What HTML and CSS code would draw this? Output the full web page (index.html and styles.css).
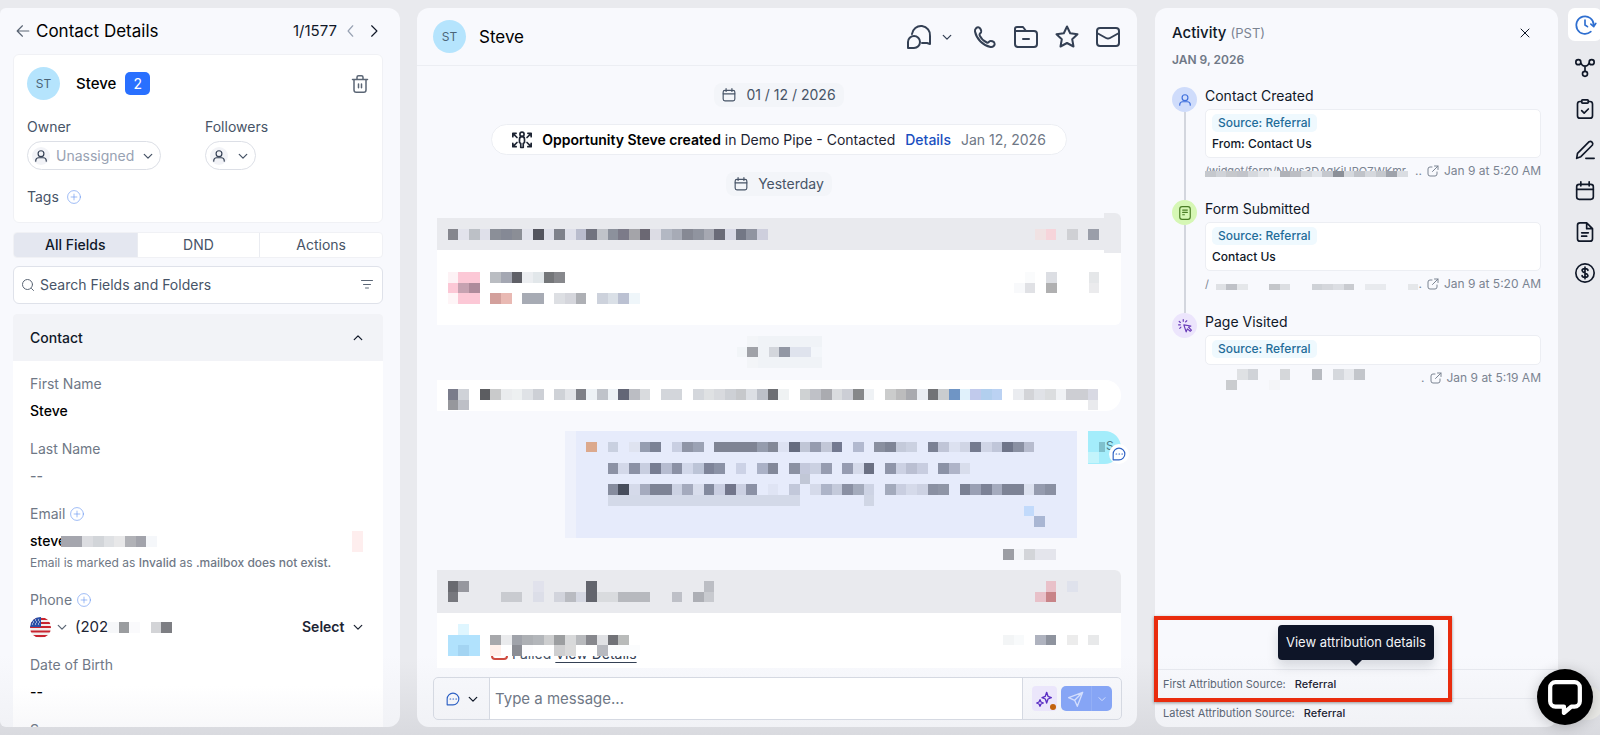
FILE: index.html
```
<!DOCTYPE html>
<html lang="en">
<head>
    <meta charset="UTF-8">
    <meta name="viewport" content="width=device-width, initial-scale=1.0">
    <title>Contact Details</title>
    <link rel="stylesheet" href="styles.css">
</head>
<body>
    <svg class="sprite" aria-hidden="true">
        <symbol id="chevron" viewBox="0 0 24 24"><path d="M3 8l9 9 9-9"/></symbol>
        <symbol id="user" viewBox="0 0 24 24"><circle cx="12" cy="8" r="5"/><path d="M3 21v-1a5 5 0 0 1 5-5h8a5 5 0 0 1 5 5v1"/></symbol>
        <symbol id="calendar" viewBox="0 0 24 24"><rect x="2" y="4" width="20" height="18" rx="3"/><path d="M2 10h20M7 1v5M17 1v5"/></symbol>
        <symbol id="plus" viewBox="0 0 24 24"><circle cx="12" cy="12" r="11"/><path d="M12 7v10M7 12h10"/></symbol>
        <symbol id="bubble" viewBox="0 0 24 24"><path d="M2 22V12a10 10 0 1 1 10 10z"/><path d="M7 12h1M12 12h1M17 12h1"/></symbol>
        <symbol id="link-out" viewBox="0 0 24 24"><path d="M10 4H6a4 4 0 0 0-4 4v10a4 4 0 0 0 4 4h10a4 4 0 0 0 4-4v-4M15 2h7v7M22 2L11 13"/></symbol>
    </svg>

    <div class="app">
        <aside class="panel contact-panel">
            <div class="panel-title">
                <button class="icon-btn" aria-label="Back"><svg class="icon s14 muted" viewBox="0 0 24 24"><path d="M22 12H2M11 3l-9 9 9 9"/></svg></button>
                <h1>Contact Details</h1>
                <span class="pager">1/1577</span>
                <button class="icon-btn" aria-label="Previous"><svg class="icon s14 faint" viewBox="0 0 24 24"><path d="M15 3l-8 9 8 9"/></svg></button>
                <button class="icon-btn next" aria-label="Next"><svg class="icon s14" viewBox="0 0 24 24"><path d="M8 3l9 9-9 9"/></svg></button>
            </div>

            <section class="summary">
                <div class="person">
                    <span class="avatar">ST</span>
                    <strong>Steve</strong>
                    <span class="count">2</span>
                    <button class="icon-btn trash" aria-label="Delete"><svg class="icon s18 muted" viewBox="0 0 24 24"><path d="M2 6h20M8 6V3a2 2 0 0 1 2-2h4a2 2 0 0 1 2 2v3M4 6v14a3 3 0 0 0 3 3h10a3 3 0 0 0 3-3V6M10 12v5M14 12v5"/></svg></button>
                </div>
                <div class="assign">
                    <div>
                        <label for="owner">Owner</label>
                        <div class="pill-select owner">
                            <span class="mini"><svg class="icon s14"><use href="#user"/></svg></span>
                            <select id="owner"><option>Unassigned</option></select>
                            <svg class="icon s10"><use href="#chevron"/></svg>
                        </div>
                    </div>
                    <div>
                        <label for="followers">Followers</label>
                        <div class="pill-select followers">
                            <span class="mini"><svg class="icon s14"><use href="#user"/></svg></span>
                            <select id="followers"><option></option></select>
                            <svg class="icon s10"><use href="#chevron"/></svg>
                        </div>
                    </div>
                </div>
                <div class="tags">Tags <button class="icon-btn" aria-label="Add tag"><svg class="icon s14 add"><use href="#plus"/></svg></button></div>
            </section>

            <div class="tabs">
                <button class="active">All Fields</button>
                <button>DND</button>
                <button>Actions</button>
            </div>

            <div class="search">
                <svg class="icon s12 muted" viewBox="0 0 24 24"><circle cx="11" cy="11" r="10"/><path d="M19 19l4 4"/></svg>
                <input type="text" placeholder="Search Fields and Folders" aria-label="Search Fields and Folders">
                <button class="icon-btn" aria-label="Filter"><svg class="icon s12 muted" viewBox="0 0 24 24"><path d="M1 3h22M5 11h14M9 18h6"/></svg></button>
            </div>

            <section class="fields">
                <button class="fields-head">Contact <svg class="icon s10 flip"><use href="#chevron"/></svg></button>
                <div class="field">
                    <div class="label">First Name</div>
                    <div class="value">Steve</div>
                </div>
                <div class="field">
                    <div class="label">Last Name</div>
                    <div class="value empty">--</div>
                </div>
                <div class="field">
                    <div class="label">Email <button class="icon-btn" aria-label="Add email"><svg class="icon s14 add"><use href="#plus"/></svg></button></div>
                    <div class="value">steve<svg class="mosaic over" data-cells="0:a5a6ae a5a6ae dcdde1 d2d5d9 dfe1e4 e8e8e9 b1b2b7 a2a3ab f5f7fa"></svg>
                        <svg class="mosaic end" data-cells="0:feeeee/0:feeeee"></svg>
                    </div>
                    <div class="note">Email is marked as <b>Invalid</b> as <b>.mailbox does not exist.</b></div>
                </div>
                <div class="field">
                    <div class="label">Phone <button class="icon-btn" aria-label="Add phone"><svg class="icon s14 add"><use href="#plus"/></svg></button></div>
                    <div class="value phone">
                        <svg class="flag" viewBox="0 0 21 21">
                            <clipPath id="round"><circle cx="10.5" cy="10.5" r="10.5"/></clipPath>
                            <g clip-path="url(#round)">
                                <path fill="#f3eeee" d="M0 0h21v21H0z"/>
                                <path stroke="#c8242f" stroke-width="2" d="M0 2h21M0 6h21M0 10h21M0 14.500h21M0 19h21"/>
                                <path fill="#2b50a8" d="M0 0h11v10H0z"/>
                                <path stroke="#fff" stroke-width="1" stroke-dasharray="1 2" d="M2 3h9M3 5h8M2 7h9"/>
                            </g>
                        </svg>
                        <svg class="icon s10 muted"><use href="#chevron"/></svg>
                        <span class="number">(202</span><svg class="mosaic" data-cells="0:f6f7f9 9a9c9f fafafc 4:d3d4d7 7d7e83"></svg>
                        <select class="end" aria-label="Phone type"><option>Select</option></select>
                        <svg class="icon s10"><use href="#chevron"/></svg>
                    </div>
                </div>
                <div class="field">
                    <div class="label">Date of Birth</div>
                    <div class="value">--</div>
                </div>
                <div class="field">
                    <div class="label">Source</div>
                </div>
            </section>
        </aside>

        <main class="panel chat-panel">
            <header class="chat-head">
                <span class="avatar">ST</span>
                <h2>Steve</h2>
                <button class="icon-btn" aria-label="Conversations"><svg class="icon s24" viewBox="0 0 24 24"><path d="M5 9a9 9 0 0 1 18 2v8l-3-1h-5"/><path d="M1 23v-6a6 6 0 1 1 6 6z"/></svg></button>
                <button class="icon-btn tight" aria-label="More"><svg class="icon s10"><use href="#chevron"/></svg></button>
                <button class="icon-btn" aria-label="Call"><svg class="icon s24" viewBox="0 0 24 24"><path d="M6 2.500c-2-.8-4.500 1.500-4 4C3.500 14 10 20.500 17.500 22c2.500.500 4.800-2 4-4-.500-1.500-3.500-2.600-4.700-1.800-1.300.8-1.500 2-3 1.300-3-1.400-5.800-4.200-7.200-7.200-.7-1.500 1-2 1.500-3.200C8.500 5.800 7.500 3 6 2.500z"/></svg></button>
                <button class="icon-btn" aria-label="Folder"><svg class="icon s24" viewBox="0 0 24 24"><path d="M1 19V4a2 2 0 0 1 2-2h6l3 4h8a3 3 0 0 1 3 3v10a3 3 0 0 1-3 3H4a3 3 0 0 1-3-3zM1 6h11M9 14h6"/></svg></button>
                <button class="icon-btn" aria-label="Star"><svg class="icon s24" viewBox="0 0 24 24"><path d="M12 1.500l3.200 6.700 7.300 1-5.300 5 1.300 7.300L12 18l-6.500 3.500 1.300-7.300-5.300-5 7.300-1z"/></svg></button>
                <button class="icon-btn" aria-label="Email"><svg class="icon s24" viewBox="0 0 24 24"><rect x="1" y="3" width="22" height="18" rx="3"/><path d="M1 8l9 5a4 4 0 0 0 4 0l9-5"/></svg></button>
            </header>

            <div class="feed">
                <div class="day"><svg class="icon s14"><use href="#calendar"/></svg> 01 / 12 / 2026</div>
                <div class="event">
                    <svg class="icon s20" viewBox="0 0 24 24"><circle cx="12" cy="5" r="2.500"/><path d="M9 11a3 3 0 0 1 6 0v4l-1.500 1v5h-3v-5L9 15zM1 8V4h4M1 4l5 5M23 8V4h-4M23 4l-5 5M1 16v4h4M1 20l5-5M23 16v4h-4M23 20l-5-5"/></svg>
                    <span><b>Opportunity Steve created</b> in Demo Pipe - Contacted</span>
                    <a href="#">Details</a>
                    <time>Jan 12, 2026</time>
                </div>
                <div class="day"><svg class="icon s14"><use href="#calendar"/></svg> Yesterday</div>

                <article class="card first">
                    <div class="card-head">
                        <svg class="mosaic" data-cells="0:e9eaee 85868e e2e3ec bcc0c6 dfe0ea 8b8f98 858995 8b8e96 e2e3ec 53545e dfe0ea 7e818b dfe0ea b9bccd 71737f c0c3c9 8c919c 7c7b89 a4a4a9 6b6873 dcdce4 b3b8c3 a7abb6 868994 90949f a6a8b2 6a6b78 d8d9e6 737785 9094a1 cecfdd"></svg>
                        <svg class="mosaic" data-cells="0:f0e2e3 f6d4da 3:cfd0d4 5:9a9ea9"></svg>
                    </div>
                    <div class="card-body">
                        <svg class="mosaic" data-cells="1:fdf2f5 fcc8d6 fcc8d6 5:babdc2 a4a7b2 5f6067 eceef1 e2e7ea 747679 87888c/1:fcc8d6 c6a2b1 ae8b9b/1:fef5f7 fcc8d6 fcc8d6 5:d3a09c e9b9b3 8:a7abb4 a7abb4 11:dddfe3 d5d6dc aeb0b5 15:cdd2dc dae0e7 bbc1d2 eff6fa"></svg>
                        <svg class="mosaic" data-cells="1:fafbfc 3:dcdee3 7:e5e7e9/0:f8f9fb e0e1e5 3:b0b0b1 7:ebebed"></svg>
                    </div>
                </article>

                <svg class="mosaic hidden-day" data-cells="2:f3f5f8 f0f3f7 f0f3f7 f0f3f7 f0f3f7 f0f3f7 f0f3f7/1:f2f5f8 a0a2a8 f0f3f7 d3d6dc 9297a4 dfe3ed dfe3ed f3f6fa 9:f8f9fd/2:f3f5f8 f0f3f7 f0f3f7 f0f3f7 f0f3f7 f0f3f7 f0f3f7"></svg>

                <div class="hidden-event">
                    <svg class="mosaic" data-cells="1:7a7c8b cfd2d8 4:5c5d61 c9cacb eaecee edf0f1 dfe2e6 cdd0d6 11:cfd2d7 e2e4e8 7e8087 edf2f6 bfc3ca edf2f6 636676 bbbdc3 d9dbde 21:d3d6db d3d6db 24:d4d7dc dfe1e3 d8dade cdd0d5 c6c8cb dcdfe4 bcc0c8 6d6f74 eff2f3 34:cfd2d3 bfc1c7 aaabb0 dadcdf ccced5 86888a eff2f5 42:cbcccc bcbcbd a9aaaf eaedf2 727376 c9cccf 6f95c5 e0f1fb c1caec b2cfee bbd2f3 54:eaecf0 d3d4d8 e0e2e7 dbdddf f0f2f5 cdced3 cdced3 d8d9e3/1:96979c bdbfc6 61:e9eaed"></svg>
                </div>

                <div class="outgoing">
                    <div class="message">
                        <svg class="mosaic" data-cells="/2:dca98d 4:c9d0e0 6:dfe3f0 959db0 7b8295 10:c9cfe2 8f95a6 9ba2b4 14:7f8494 7f8494 7f8494 7f8494 959cad 838897 dde2f2 666c7f c0c6d6 959bae c2c7d7 737990 27:b2b9cf 29:8a90a0 7f8596 c4cada cbd1e1 34:7b8194 c0c5d7 dce1f0 d0d5e5 757b8f d0d5e6 c0c6d9 6f7589 8a90a2 b7bcce//4:8c92a5 d3d8e9 8b91a5 c8cee0 777d92 b6bcd0 8b91a5 d2d8ea bcc4d7 7e8499 8b92a6 16:ccd2e6 18:aab1c6 828899 21:8b91a2 c4c9dc cbd1e2 969cb0 26:969cb1 d5daea 6b7083 30:8f95a9 ccd1e3 babfd2 c8cde0 35:8b92a6 afb4c8 d8ddec/22:c1c7d6/4:868c9e 484e5d d5daea a5abbe 7d8395 7d8395 ccd2e3 a4aabd d8ddec 838a9e c9cee1 72768b cbd0e2 8b91a5 19:dfe4f4 21:c2c8da 23:d5daea adb4c8 c4cadb 8a90a3 a4abbc cdd3e4 30:a3aabc c9cee0 d5daea cdd2e3 8a90a2 8f95a6 37:7a8093 9aa0b4 7c8296 a5abbe 7d8395 7d8395 dce1ef 959bae 8a90a2/4:d3d9e8 d3d9e8 d3d9e8 d3d9e8 d3d9e8 d3d9e8 d3d9e8 d3d9e8 d3d9e8 d3d9e8 d3d9e8 d3d9e8 d3d9e8 d3d9e8 d3d9e8 d3d9e8 d3d9e8 d3d9e8 28:d0d6e5/43:c2dafb/44:a9b6d3"></svg>
                    </div>
                    <div class="sender">
                        <span class="sender-avatar">S</span>
                        <svg class="mosaic" data-cells="0:a4edfb a4edfb/0:a4edfb 7fc0cc/0:c3f4fb a4edfb"></svg>
                        <span class="channel"><svg class="icon s14 blue"><use href="#bubble"/></svg></span>
                    </div>
                </div>

                <svg class="mosaic hidden-time" data-cells="0:9c9ea4 f3f5f8 d3d5d9 e4e5ec e4e5ec"></svg>

                <article class="card second">
                    <div class="card-head">
                        <svg class="mosaic" data-cells="1:696a70 96979e 9:e1e2ec 14:63656d 25:bcbec4/1:77787e 6:c9cbd0 c9cbd0 9:dcdee8 11:d2d4dc b9bbc1 d5d8e2 63656d d9dbde d9dbde b7b9be b7b9be b7b9be 22:bec0c7 24:adafb5 c8cacf"></svg>
                        <svg class="mosaic" data-cells="1:e9c1c9 3:dfe2ec/0:e8c1c9 c88488 5:e9eaee"></svg>
                    </div>
                    <div class="card-body">
                        <svg class="mosaic" data-cells="2:dff6ff/1:b1e2fd b1e2fd b1e2fd 5:a7a8ab eaebed a0a3aa adb0b4 b3b6ba cdcecf 9c9ea0 d8d9da b8babd 87888d e0e1e4 717277 b9bbba/1:b1e2fd a3d4f2 b1e2fd 5:fff0ea ffffff 8b8d94 fcfcfd ffffff ffffff cfcfd0 dadada ffffff ffffff b7b9bf fbfcfd fbfcfd fbfcfd"></svg>
                        <svg class="mosaic" data-cells="/0:f3f5f6 f8fafb 3:afb3bf 8e939e 6:ececec 8:e8e9ea"></svg>
                        <div class="failed"><span class="stub"></span>Failed <a href="#">View Details</a></div>
                    </div>
                </article>
            </div>

            <form class="composer">
                <button type="button" class="channel-btn" aria-label="Channel"><svg class="icon s14 blue"><use href="#bubble"/></svg><svg class="icon s10"><use href="#chevron"/></svg></button>
                <input type="text" placeholder="Type a message..." aria-label="Message">
                <div class="composer-actions">
                    <button type="button" class="ai-btn" aria-label="Write with AI"><svg class="icon s16" viewBox="0 0 24 24"><path d="M16 2l2 6 5 2-5 2-2 6-2-6-5-2 5-2zM6 13l1.500 3.500L11 18l-3.500 1.500L6 23l-1.500-3.500L1 18l3.500-1.500z"/></svg></button>
                    <div class="send">
                        <button type="button" aria-label="Send"><svg class="icon s16" viewBox="0 0 24 24"><path d="M22 2L1 10l9 4 4 9zM22 2L10 14"/></svg></button>
                        <button type="button" aria-label="Send options"><svg class="icon s8"><use href="#chevron"/></svg></button>
                    </div>
                </div>
            </form>
        </main>

        <aside class="panel activity-panel">
            <header class="activity-head">
                <h2>Activity <small>(PST)</small></h2>
                <button class="icon-btn" aria-label="Close"><svg class="icon s12" viewBox="0 0 24 24"><path d="M4 4l16 16M20 4L4 20"/></svg></button>
            </header>
            <div class="date">JAN 9, 2026</div>
            <ul class="timeline">
                <li>
                    <span class="dot created"><svg class="icon s14"><use href="#user"/></svg></span>
                    <h3>Contact Created</h3>
                    <div class="box"><span class="source">Source: Referral</span><p>From: Contact Us</p></div>
                    <div class="meta">
                        <span class="url">/widget/form/NVus3DAgKiUPQZWKmr<svg class="mosaic cover" data-cells="0:c5c8cd d0d3d8 c6c8cc c2c4ca d5d8dd e3e6ea f0f2f5 b0b2b8 bcbec4 d5d8dd e2e5ea c5c8ce 8c9098 d5d8dd c0c3c9 d5d8dd c5c8cd 9fa3ab dadde2"></svg></span>
                        <span>..</span><svg class="icon s12"><use href="#link-out"/></svg><time>Jan 9 at 5:20 AM</time>
                    </div>
                </li>
                <li>
                    <span class="dot form"><svg class="icon s14" viewBox="0 0 24 24"><rect x="3" y="1" width="18" height="22" rx="4"/><path d="M8 7h8M8 11h8M8 15h3"/></svg></span>
                    <h3>Form Submitted</h3>
                    <div class="box"><span class="source">Source: Referral</span><p>Contact Us</p></div>
                    <div class="meta">
                        <span class="url">/<svg class="mosaic" data-cells="1:dfe1e5 bfc1c7 e5e7ea 6:c4c6ca dcdee2 10:cfd2d7 d5d7dc dcdee3 c9cbd0 15:e8eaee e8eaee 19:e5e7ea"></svg></span>
                        <span>...</span><svg class="icon s12"><use href="#link-out"/></svg><time>Jan 9 at 5:20 AM</time>
                    </div>
                </li>
                <li>
                    <span class="dot visit"><svg class="icon s14" viewBox="0 0 24 24"><path d="M10 10l4 12 2-5 5 4 2-2-5-5 4-2zM9 1v3M2 4l2 2M1 10h3M3 16l2-2M15 3l-2 2"/></svg></span>
                    <h3>Page Visited</h3>
                    <div class="box"><span class="source">Source: Referral</span></div>
                    <div class="meta">
                        <span class="url"><svg class="mosaic tall" data-cells="3:dfe1e4 d0d3d8 7:d5d7da 10:b8bbc1 12:d5d8dd e6e8ec c3c6cb/2:cacccf 6:f4f5f8"></svg></span>
                        <span>.</span><svg class="icon s12"><use href="#link-out"/></svg><time>Jan 9 at 5:19 AM</time>
                    </div>
                </li>
            </ul>
            <footer class="sources">
                <div>First Attribution Source: <b>Referral</b></div>
                <div>Latest Attribution Source: <b>Referral</b></div>
                <div class="highlight"><span class="tooltip" role="tooltip">View attribution details</span></div>
            </footer>
        </aside>

        <nav class="rail">
            <button class="active" aria-label="Activity"><svg class="icon s20" viewBox="0 0 24 24"><path d="M19 20a10.500 10.500 0 1 1 3.500-8M12 6v6l3 2M19 11l3.500 3L25 10"/></svg></button>
            <button aria-label="Opportunities"><svg class="icon s20" viewBox="0 0 24 24"><circle cx="4" cy="5" r="3"/><circle cx="20" cy="5" r="3"/><circle cx="12" cy="19" r="3"/><path d="M7 6c2 5 8 5 10 0M12 10v6"/></svg></button>
            <button aria-label="Tasks"><svg class="icon s20" viewBox="0 0 24 24"><path d="M8 3H6a3 3 0 0 0-3 3v14a3 3 0 0 0 3 3h12a3 3 0 0 0 3-3V6a3 3 0 0 0-3-3h-2"/><rect x="8" y="1" width="8" height="4" rx="1"/><path d="M8 14l3 3 5-5"/></svg></button>
            <button aria-label="Notes"><svg class="icon s20" viewBox="0 0 24 24"><path d="M13 22h10M2 22l1-6L17 2a3 3 0 0 1 4 4L7 20z"/></svg></button>
            <button aria-label="Appointments"><svg class="icon s20"><use href="#calendar"/></svg></button>
            <button aria-label="Documents"><svg class="icon s20" viewBox="0 0 24 24"><path d="M14 1H6a3 3 0 0 0-3 3v16a3 3 0 0 0 3 3h12a3 3 0 0 0 3-3V8zM14 1v7h7M8 13h8M8 17h6"/></svg></button>
            <button aria-label="Payments"><svg class="icon s20" viewBox="0 0 24 24"><circle cx="12" cy="12" r="11"/><path d="M15.500 9c0-3-7-3-7 0s7 3 7 6-7 3-7 0M12 5v14"/></svg></button>
        </nav>
    </div>

    <span class="chat-shadow"></span>
    <button class="chat-widget" aria-label="Open chat"><svg viewBox="0 0 34 34"><path d="M8 3h18a5 5 0 0 1 5 5v13a5 5 0 0 1-5 5h-3l-7 6v-6H8a5 5 0 0 1-5-5V8a5 5 0 0 1 5-5z"/></svg></button>

    <script src="script.js"></script>
</body>
</html>
```
FILE: styles.css
```
* {
    margin: 0;
    padding: 0;
    box-sizing: border-box;
}

body {
    font-family: Inter, "Liberation Sans", sans-serif;
    font-size: 14px;
    line-height: 20px;
    color: #101828;
    background: linear-gradient(#e9eaee 90%, #d9dadf);
    height: 100vh;
    overflow: hidden;
}

button, input, select {
    font: inherit;
    color: inherit;
    background: none;
    border: none;
    outline: none;
    appearance: none;
}

button {
    cursor: pointer;
}

a {
    text-decoration: none;
}

h1, h2, h3, b, strong {
    font-weight: 500;
}

.sprite {
    display: none;
}

.icon {
    display: block;
    flex: none;
    fill: none;
    stroke: currentColor;
    stroke-width: 2;
    stroke-linecap: round;
    stroke-linejoin: round;
    overflow: visible;
}

.s8 { width: 8px; height: 8px; stroke-width: 3; }
.s10 { width: 10px; height: 10px; stroke-width: 3; }
.s12 { width: 12px; height: 12px; }
.s14 { width: 14px; height: 14px; }
.s16 { width: 16px; height: 16px; }
.s18 { width: 18px; height: 18px; }
.s20 { width: 20px; height: 20px; }
.s24 { width: 24px; height: 24px; }

.muted { color: #5b6675; }
.faint { color: #98a2b3; }
.blue { color: #2f62c4; }

.add {
    color: #5b8def;
    stroke-width: 1;
}

.flip {
    transform: rotate(180deg);
}

.icon-btn {
    display: inline-flex;
    align-items: center;
}

.mosaic {
    display: block;
    flex: none;
}

.app {
    display: grid;
    grid-template-columns: 400px 1fr 403px 42px;
    height: 100vh;
    padding: 8px 0;
}

.panel {
    display: flex;
    flex-direction: column;
    min-width: 0;
    min-height: 0;
    background: linear-gradient(#f8f9fd 90%, #f1f2f6);
    border-radius: 12px;
    overflow: hidden;
}

.avatar {
    display: flex;
    align-items: center;
    justify-content: center;
    width: 33px;
    height: 33px;
    border-radius: 50%;
    background: #b5e4fd;
    color: #4b6478;
    font-size: 12px;
}

/* contact column */

.contact-panel {
    padding: 0 17px 0 13px;
    border-radius: 6px 12px 12px 6px;
}

.panel-title {
    display: flex;
    align-items: center;
    height: 46px;
    flex: none;
    padding: 0 2px 0 3px;
}

.panel-title h1 {
    font-size: 17px;
    font-weight: 400;
    margin-left: 6px;
    flex: 1;
    color: #000;
}

.pager {
    font-size: 15px;
    margin-right: 7px;
}

.next {
    margin-left: 9px;
}

.summary {
    flex: none;
    height: 169px;
    padding: 12px 14px;
    background: #fff;
    border: 1px solid #f0f1f5;
    border-radius: 6px;
}

.person {
    display: flex;
    align-items: center;
    margin: 0 -1px;
}

.person strong {
    font-size: 15px;
    font-weight: 500;
    margin-left: 16px;
    color: #000;
}

.count {
    width: 25px;
    height: 23px;
    margin-left: 9px;
    border-radius: 5px;
    background: #2970ff;
    color: #fff;
    line-height: 23px;
    text-align: center;
}

.trash {
    margin-left: auto;
}

.assign {
    display: grid;
    grid-template-columns: 178px 1fr;
    margin: 17px 0 0 -1px;
    color: #475467;
}

.pill-select {
    display: flex;
    align-items: center;
    height: 29px;
    margin-top: 4px;
    padding: 0 7px 0 4px;
    border: 1px solid #dcdfe6;
    border-radius: 15px;
}

.owner { width: 134px; }
.followers { width: 51px; }

.pill-select select {
    flex: 1;
    min-width: 0;
    padding-left: 6px;
    color: #98a2b3;
}

.mini {
    padding: 2px;
    border-radius: 50%;
    background: #f2f3f7;
    color: #344054;
}

.tags {
    display: flex;
    align-items: center;
    gap: 8px;
    margin: 17px 0 0 -1px;
    color: #475467;
}

.tabs {
    display: grid;
    grid-template-columns: 1fr 1fr 1fr;
    flex: none;
    height: 26px;
    margin-top: 9px;
    border: 1px solid #f0f1f5;
    border-radius: 4px;
    overflow: hidden;
    background: #fff;
    color: #475467;
}

.tabs button + button {
    border-left: 1px solid #eaecf1;
}

.tabs .active {
    background: #e4e7f0;
    color: #101828;
    font-weight: 500;
}

.search {
    display: flex;
    align-items: center;
    flex: none;
    height: 38px;
    margin-top: 8px;
    padding: 0 9px 0 8px;
    background: #fff;
    border: 1px solid #dfe2ea;
    border-radius: 6px;
}

.search input {
    flex: 1;
    min-width: 0;
    padding-left: 6px;
}

.search input::placeholder {
    color: #475467;
    opacity: 1;
}

.fields {
    flex: 1;
    min-height: 0;
    margin-top: 10px;
    overflow: hidden;
    background: linear-gradient(#fff 90%, #f8f8fa);
    border-radius: 4px 4px 0 0;
}

.fields-head {
    display: flex;
    align-items: center;
    justify-content: space-between;
    width: 100%;
    height: 47px;
    padding: 0 20px 0 17px;
    margin-bottom: 12px;
    background: #f2f3f7;
    font-weight: 500;
}

.field {
    padding: 0 20px 0 17px;
    margin-bottom: 16px;
}

.label {
    display: flex;
    align-items: center;
    gap: 5px;
    height: 22px;
    color: #6f7886;
}

.value {
    display: flex;
    align-items: center;
    height: 22px;
    margin-top: 5px;
    font-weight: 500;
    color: #000;
}

.value.empty {
    color: #6f7886;
}

.over {
    position: relative;
    margin-left: -5px;
}

.end {
    margin-left: auto;
}

.note {
    height: 21px;
    line-height: 22px;
    font-size: 12px;
    color: #6f7886;
}

.phone {
    color: #1d2433;
}

.flag {
    width: 21px;
    height: 21px;
    margin-right: 6px;
}

.number {
    margin-left: 8px;
    font-size: 15px;
    font-weight: 400;
}

.phone select {
    margin-right: 8px;
    font-weight: 600;
}

/* conversation */

.chat-panel {
    margin: 0 18px 0 17px;
}

.chat-head {
    display: flex;
    align-items: center;
    gap: 17px;
    flex: none;
    height: 58px;
    padding: 0 17px 0 16px;
    border-bottom: 1px solid #eceef3;
    color: #344054;
}

.chat-head h2 {
    flex: 1;
    margin-left: -4px;
    font-size: 17px;
    font-weight: 400;
    color: #000;
}

.chat-head .tight {
    margin: 0 4px 0 -6px;
}

.feed {
    display: flex;
    flex-direction: column;
    align-items: center;
    flex: 1;
    min-height: 0;
    overflow: hidden;
    padding: 17px 16px 0 20px;
}

.day {
    display: flex;
    align-items: center;
    gap: 10px;
    flex: none;
    height: 24px;
    padding: 0 8px;
    border-radius: 8px;
    background: #f3f5f9;
    color: #475467;
}

.event {
    display: flex;
    align-items: center;
    gap: 10px;
    flex: none;
    height: 31px;
    margin: 17px 0;
    padding: 0 20px;
    border: 1px solid #eceef3;
    border-radius: 16px;
    background: #fff;
    color: #1d2433;
    white-space: nowrap;
}

.event b {
    font-weight: 600;
    color: #000;
}

.event a {
    color: #1a4fc0;
    font-weight: 500;
}

.event time {
    color: #6f7886;
}

.card {
    flex: none;
    width: 100%;
    background: #fff;
    border-radius: 0 6px 6px 0;
}

.card-head, .card-body {
    display: flex;
    justify-content: space-between;
    position: relative;
    padding-right: 22px;
}

.card-head {
    background: #e9eaee;
}

.first {
    margin-top: 22px;
}

.first .card-head {
    height: 32px;
    padding-top: 11px;
}

/* rounded end of the header bar */
.first .card-head::after {
    content: "";
    position: absolute;
    top: -5px;
    right: 0;
    width: 17px;
    height: 40px;
    background: #e9eaee;
    border-radius: 0 6px 0 0;
}

.first .card-body {
    height: 75px;
    padding-top: 22px;
}

.hidden-day {
    margin-top: 11px;
}

.hidden-event {
    flex: none;
    width: 100%;
    height: 31px;
    margin-top: 12px;
    padding-top: 9px;
    background: #fff;
    border-radius: 0 16px 16px 0;
}

.outgoing {
    display: flex;
    align-items: flex-start;
    justify-content: flex-end;
    gap: 11px;
    flex: none;
    width: 100%;
    margin-top: 20px;
}

.message {
    width: 512px;
    height: 107px;
    border-left: 11px solid #eef1fb;
    background: #e6ebfb;
}

.message .mosaic {
    margin-left: -11px;
}

.sender {
    position: relative;
    width: 33px;
    height: 33px;
}

.sender-avatar {
    display: block;
    height: 33px;
    padding: 5px 0 0 18px;
    border-radius: 0 17px 17px 0;
    background: #a4edfb;
    color: #4b7b88;
    font-size: 12px;
}

.sender .mosaic {
    position: absolute;
    top: 0;
    left: 0;
    width: 17px;
}

.channel {
    position: absolute;
    left: 21px;
    top: 13px;
    padding: 3px;
    border-radius: 50%;
    background: #fff;
}

.hidden-time {
    align-self: flex-end;
    margin: 11px 65px 10px 0;
}

.second .card-head {
    height: 43px;
    padding-top: 11px;
    border-radius: 0 6px 0 0;
}

.second .card-body {
    height: 60px;
    padding-top: 11px;
}

.second .card-body .mosaic {
    position: relative;
    z-index: 1;
}

.failed {
    position: absolute;
    left: 54px;
    top: 31px;
    display: flex;
    gap: 4px;
    color: #475467;
}

.failed a {
    color: #344054;
    text-decoration: underline;
    text-underline-offset: 3px;
}

.stub {
    width: 17px;
    height: 16px;
    border: 2px solid #cf4b3f;
    border-radius: 4px;
}

.composer {
    display: flex;
    flex: none;
    height: 43px;
    margin: 9px 15px 7px 16px;
    border: 1px solid #d5d9e2;
    border-radius: 5px;
    overflow: hidden;
}

.channel-btn {
    display: flex;
    align-items: center;
    gap: 8px;
    width: 56px;
    padding-left: 12px;
    border-right: 1px solid #d5d9e2;
}

.composer input {
    flex: 1;
    min-width: 0;
    padding: 0 5px;
    background: #fff;
    font-size: 15px;
}

.composer input::placeholder {
    color: #6f7886;
    opacity: 1;
}

.composer-actions {
    display: flex;
    align-items: center;
    gap: 4px;
    padding: 0 9px;
    border-left: 1px solid #d5d9e2;
}

.ai-btn {
    position: relative;
    width: 25px;
    height: 25px;
    padding: 4px;
    border-radius: 4px;
    background: #ebe6fb;
    color: #5b2fc4;
}

.ai-btn::after {
    content: "";
    position: absolute;
    right: 1px;
    bottom: 1px;
    width: 6px;
    height: 6px;
    border-radius: 50%;
    background: #c2620e;
}

.send {
    display: flex;
    height: 25px;
    border-radius: 5px;
    background: #86a5f5;
    color: #d3defd;
}

.send button {
    padding: 0 6px;
}

.send button:first-child {
    padding: 0 7px;
    border-right: 1px solid #93aff6;
}

/* activity */

.activity-panel {
    position: relative;
    overflow: visible;
}

.activity-head {
    display: flex;
    align-items: center;
    justify-content: space-between;
    padding: 15px 27px 0 17px;
}

.activity-head h2 {
    font-size: 15px;
}

.activity-head small {
    font-size: 13px;
    font-weight: 400;
    color: #7b8492;
}

.date {
    margin: 7px 0 0 17px;
    font-size: 12px;
    font-weight: 600;
    color: #6f7886;
}

.timeline {
    flex: 1;
    padding: 16px 17px 0 50px;
    list-style: none;
}

.timeline li {
    position: relative;
    height: 113px;
}

.timeline li + li::before {
    content: "";
    position: absolute;
    left: -21px;
    top: -87px;
    width: 2px;
    height: 88px;
    background: #d3d6de;
}

.dot {
    position: absolute;
    left: -33px;
    top: 1px;
    display: flex;
    align-items: center;
    justify-content: center;
    width: 25px;
    height: 25px;
    border-radius: 50%;
}

.created { background: #cfdcfb; color: #3f6fdc; }
.form { background: #d6f7b5; color: #4a7d25; }
.visit { background: #ece5fc; color: #6739b7; }

.timeline h3 {
    font-size: 14px;
    font-weight: 400;
}

.box {
    margin-top: 3px;
    padding: 4px 6px;
    background: #fff;
    border: 1px solid #eceef3;
    border-radius: 5px;
    font-size: 12px;
    font-weight: 500;
}

.source {
    display: inline-block;
    height: 18px;
    padding: 0 6px;
    border-radius: 5px;
    background: #eff9fe;
    color: #1f6c99;
    line-height: 18px;
    vertical-align: top;
}

.box p {
    line-height: 19px;
}

.meta {
    display: flex;
    align-items: center;
    gap: 5px;
    height: 26px;
    color: #7b8492;
    font-size: 12px;
}

.url {
    position: relative;
    flex: 1;
    min-width: 0;
    height: 20px;
    white-space: nowrap;
    font-size: 11px;
}

.url .mosaic {
    position: absolute;
    left: 0;
    top: 10px;
    height: 6px;
}

.url .cover {
    background: #f8f9fd;
}

/* two rows, the first one starts above the text line */
.url .tall {
    top: 1px;
    height: 21px;
}

.sources {
    position: relative;
    font-size: 11px;
    color: #5b6675;
}

.sources > div {
    height: 29px;
    padding: 0 8px;
    line-height: 29px;
    border-top: 1px solid #e6e8ee;
}

.sources b {
    margin-left: 6px;
    color: #1d2433;
}

.sources .highlight {
    position: absolute;
    left: -1px;
    bottom: 25px;
    width: 298px;
    height: 86px;
    border: 4px solid #e92c0e;
    box-shadow: 0 1px 3px rgba(0, 0, 0, 0.4);
}

.tooltip {
    position: absolute;
    right: 14px;
    top: 5px;
    padding: 0 8px;
    border-radius: 4px;
    background: #0e1528;
    color: #f2f4f7;
    font-size: 13px;
    line-height: 35px;
    white-space: nowrap;
    box-shadow: 0 6px 12px rgba(16, 24, 40, 0.15);
}

.tooltip::after {
    content: "";
    position: absolute;
    left: 50%;
    top: 100%;
    margin-left: -6px;
    border: 6px solid transparent;
    border-top-color: #0e1528;
}

/* right rail */

.rail {
    display: flex;
    flex-direction: column;
    gap: 8px;
    padding-left: 10px;
}

.rail button {
    display: flex;
    align-items: center;
    justify-content: center;
    width: 34px;
    height: 33px;
    border-radius: 7px;
}

.rail .active {
    margin-bottom: 2px;
    background: #fff;
    color: #2f6fd0;
}

.chat-shadow {
    position: fixed;
    right: -4px;
    bottom: 15px;
    width: 34px;
    height: 34px;
    border-radius: 50%;
    background: #e9e9e6;
}

.chat-widget {
    position: fixed;
    right: 7px;
    bottom: 10px;
    width: 56px;
    height: 56px;
    padding: 10px;
    border-radius: 50%;
    background: #000;
    box-shadow: 0 2px 14px rgba(0, 0, 0, 0.2);
}

.chat-widget svg {
    display: block;
    width: 36px;
    height: 36px;
    fill: none;
    stroke: #fff;
    stroke-width: 4;
    stroke-linejoin: round;
}
```
FILE: script.js
```
// Draws the redacted blocks. Rows are split by "/", "n:" jumps to column n.
const CELL = 32 / 3;

document.querySelectorAll('.mosaic').forEach(function(svg) {
    const rows = svg.dataset.cells.split('/');
    let cols = 0;

    rows.forEach(function(row, y) {
        let x = 0;
        row.split(' ').filter(Boolean).forEach(function(token) {
            const parts = token.split(':');
            if (parts.length > 1) {
                x = Number(parts[0]);
            }
            const rect = document.createElementNS('http://www.w3.org/2000/svg', 'rect');
            rect.setAttribute('x', x * CELL);
            rect.setAttribute('y', y * CELL);
            rect.setAttribute('width', CELL);
            rect.setAttribute('height', CELL);
            rect.setAttribute('fill', '#' + parts[parts.length - 1]);
            rect.setAttribute('shape-rendering', 'crispEdges');
            svg.appendChild(rect);
            x++;
            cols = Math.max(cols, x);
        });
    });

    svg.setAttribute('width', Math.round(cols * CELL));
    svg.setAttribute('height', Math.round(rows.length * CELL));
});
```
